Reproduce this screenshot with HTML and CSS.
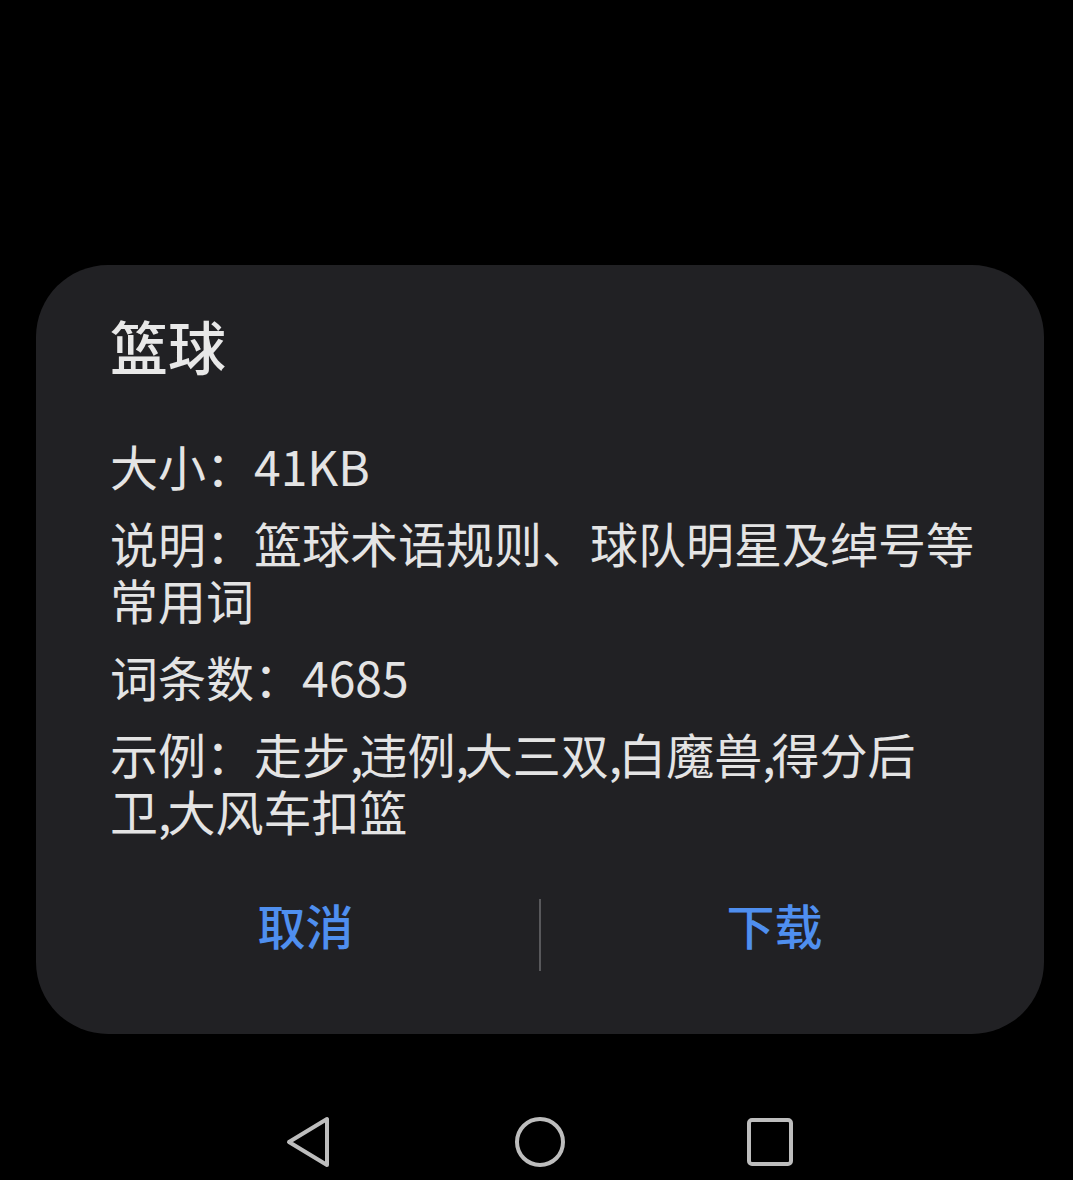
FILE: index.html
```html
<!DOCTYPE html>
<html lang="zh-CN">
<head>
<meta charset="utf-8">
<title>篮球</title>
<link rel="stylesheet" href="styles.css">
</head>
<body>
<div class="screen">
  <div class="dialog">
    <div class="content">
      <h1 class="title">篮球</h1>
      <p class="row">大小：41KB</p>
      <p class="row">说明：篮球术语规则、球队明星及绰号等<br>常用词</p>
      <p class="row">词条数：4685</p>
      <p class="row">示例：走步<span class="c">,</span>违例<span class="c">,</span>大三双<span class="c">,</span>白魔兽<span class="c">,</span>得分后<br>卫<span class="c">,</span>大风车扣篮</p>
    </div>
    <div class="actions">
      <button class="btn">取消</button>
      <span class="sep"></span>
      <button class="btn">下载</button>
    </div>
  </div>
  <nav class="navbar">
    <svg class="nav-icon nav-back" viewBox="0 0 44 52" width="44" height="52">
      <path d="M41 3 L41 49 L3 26 Z" fill="none" stroke="#bdbdbd" stroke-width="4" stroke-linejoin="round"/>
    </svg>
    <svg class="nav-icon nav-home" viewBox="0 0 52 52" width="52" height="52">
      <circle cx="26" cy="26" r="23" fill="none" stroke="#bdbdbd" stroke-width="4"/>
    </svg>
    <svg class="nav-icon nav-recent" viewBox="0 0 46 48" width="46" height="48">
      <rect x="2" y="2" width="42" height="44" rx="3" fill="none" stroke="#bdbdbd" stroke-width="4"/>
    </svg>
  </nav>
</div>
</body>
</html>
```

FILE: styles.css
```css
html, body {
  margin: 0;
  padding: 0;
  background: #000;
}

body {
  font-family: "Noto Sans CJK SC", "Noto Sans", sans-serif;
  color: #e6e6e6;
}

.screen {
  width: 1073px;
  height: 1180px;
  display: flex;
  flex-direction: column;
  align-items: flex-start;
}

.dialog {
  margin-top: 265px;
  margin-left: 36px;
  width: 1008px;
  height: 769px;
  box-sizing: border-box;
  background: #212124;
  border-radius: 72px;
  display: flex;
  flex-direction: column;
}

.content {
  padding: 45px 34px 0 74px;
}

.title {
  margin: 0 0 57px;
  font-size: 58px;
  line-height: 70px;
  font-weight: 500;
  color: #e8e8e8;
}

.row {
  margin: 0 0 20px;
  font-size: 48px;
  line-height: 57px;
  font-weight: 400;
  color: #e4e4e4;
}

.c {
  letter-spacing: -4px;
}

.actions {
  margin-top: 40px;
  padding: 0 36px;
  height: 72px;
  display: flex;
  align-items: center;
}

.btn {
  flex: 1;
  background: none;
  border: 0;
  padding: 0;
  font-family: "Noto Sans CJK SC", sans-serif;
  font-size: 48px;
  line-height: 60px;
  font-weight: 500;
  color: #4f8fef;
  margin-top: -22px;
}

.sep {
  width: 2px;
  height: 72px;
  background: #58585b;
}

.navbar {
  margin-top: auto;
  margin-bottom: 10px;
  align-self: stretch;
  display: flex;
  align-items: center;
  padding-left: 286px;
  height: 56px;
}

.nav-icon {
  display: block;
}

.nav-home {
  margin-left: 184px;
}

.nav-recent {
  margin-left: 181px;
}
```
